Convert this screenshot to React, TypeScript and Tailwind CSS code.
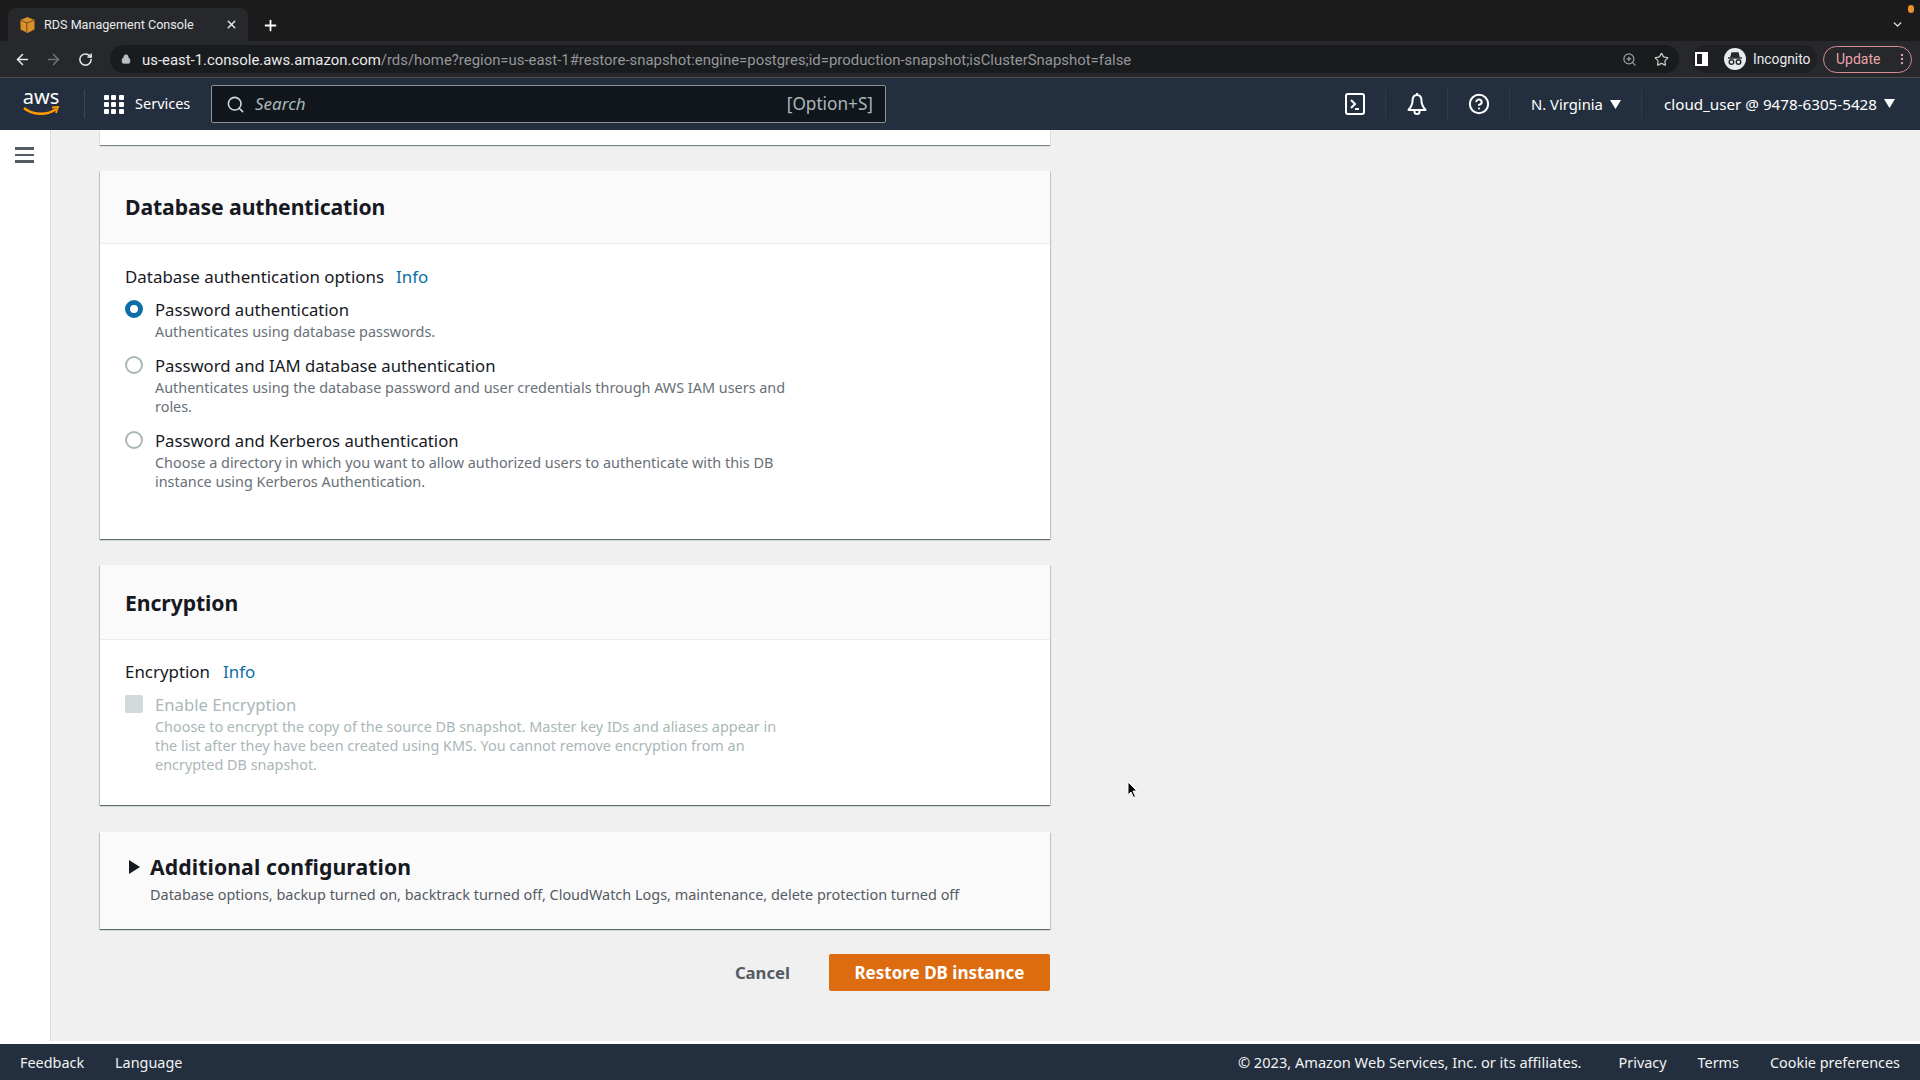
import { ArrowLeft, ArrowRight, RotateCw, Lock, ZoomIn, Star, X, Plus, ChevronDown, Search, CircleHelp, MoreVertical } from 'lucide-react';

const bodyFont = "font-['Noto_Sans','Open_Sans',sans-serif]";

function Card({ title, headerClass, children }: { title: string; headerClass: string; children: React.ReactNode }) {
  return (
    <section className="bg-white shadow-[0_1px_1px_0_rgba(0,28,36,0.5),1px_1px_1px_0_rgba(0,28,36,0.12),-1px_1px_1px_0_rgba(0,28,36,0.12)]">
      <div className={`${headerClass} bg-[#fafafa] border-b border-[#eaeded] pl-[25px] flex items-center`}>
        <h2 className="text-[21.2px] font-bold text-[#16191f] tracking-[-0.1px]">{title}</h2>
      </div>
      {children}
    </section>
  );
}

function InfoLabel({ label, gap }: { label: string; gap: string }) {
  return (
    <div className={`flex ${gap} text-[16.9px] leading-[20px] text-[#16191f]`}>
      <span>{label}</span>
      <span className="text-[#0b6ea8]">Info</span>
    </div>
  );
}

function RadioRow({ checked, title, lines }: { checked?: boolean; title: string; lines: string[] }) {
  return (
    <div className="flex gap-[12px]">
      <div
        className={
          checked
            ? 'w-[18px] h-[18px] mt-[1px] rounded-full border-[5px] border-[#0b6ea8] bg-white shrink-0'
            : 'w-[18px] h-[18px] mt-[1px] rounded-full border-2 border-[#aab7b8] bg-white shrink-0'
        }
      />
      <div>
        <div className="text-[16.7px] leading-[24px] text-[#16191f] -mt-[1px]">{title}</div>
        {lines.map(l => (
          <div key={l} className="text-[14.42px] leading-[19px] text-[#687078] whitespace-nowrap">{l}</div>
        ))}
      </div>
    </div>
  );
}

function AwsLogo() {
  return (
    <svg width="40" height="40" viewBox="0 0 40 40" className="mb-[4px]">
      <text x="20" y="22" textAnchor="middle" fill="#fff" fontSize="20" fontFamily="Noto Sans, sans-serif">aws</text>
      <path d="M3 26 C 11 33, 26 34, 35 27" stroke="#ff9900" strokeWidth="2.4" fill="none" />
      <path d="M31 25.5 L37 25 L35 31" stroke="#ff9900" strokeWidth="1.8" fill="none" />
    </svg>
  );
}

function GridIcon() {
  return (
    <div className="grid grid-cols-3 gap-[2px] w-[20px]">
      {Array.from({ length: 9 }).map((_, i) => (
        <div key={i} className="w-[5px] h-[5px] bg-white rounded-[1px]" />
      ))}
    </div>
  );
}

function NavIcon({ children }: { children: React.ReactNode }) {
  return (
    <div className="w-[62px] h-[30px] flex items-center justify-center border-r border-[#2f3b4a]">{children}</div>
  );
}

function ChromeBar() {
  return (
    <div className="font-['Roboto',sans-serif]">
      <div className="h-[41px] bg-[#1b1b1b] relative flex items-end pl-2">
        <div className="w-[240px] h-[33px] bg-[#26282b] rounded-t-lg flex items-center pl-[12px] pr-[10px] text-[#e8eaed]">
          <svg width="15" height="16" viewBox="0 0 15 16" className="shrink-0">
            <path d="M7.5 0 L14.5 3 V12.5 L7.5 16 L0.5 12.5 V3 Z" fill="#d88f2c" />
            <path d="M6.8 5 V15.5 M0.5 3 L7 6 L14.5 3" stroke="#7a4d14" strokeWidth="1" fill="none" />
          </svg>
          <span className="ml-[9px] text-[12.6px] leading-[20px] mt-[1px] flex-1 whitespace-nowrap">RDS Management Console</span>
          <X size={13} strokeWidth={2.5} />
        </div>
        <Plus size={17} strokeWidth={2.5} className="text-white ml-[14px] mb-[7px]" />
        <ChevronDown size={13} strokeWidth={2.5} className="text-[#e8eaed] ml-auto mr-[16px] mb-[10px]" />
        <div className="absolute right-[6px] top-[5px] w-[6px] h-[8px] rounded-full bg-[#e8912d]" />
      </div>
      <div className="h-[37px] bg-[#26282b] flex items-center border-b border-[#4a4c4e]">
        <div className="w-[110px] flex items-center gap-[14px] pl-[14px] shrink-0">
          <ArrowLeft size={17} strokeWidth={2.2} className="text-[#e8eaed]" />
          <ArrowRight size={17} strokeWidth={2.2} className="text-[#6f7275]" />
          <RotateCw size={15} strokeWidth={2.4} className="text-[#e8eaed] ml-[2px]" />
        </div>
        <div className="w-[1569px] h-[28px] bg-[#1a1b1d] rounded-full flex items-center pl-[11px] pr-[10px] text-[14.92px] leading-[20px] whitespace-nowrap shrink-0">
          <Lock size={10} fill="#bdc1c6" className="text-[#bdc1c6] mr-[11px]" />
          <span className="text-[#e8eaed] mt-[1px]">us-east-1.console.aws.amazon.com</span>
          <span className="text-[#93979c] mt-[1px]">/rds/home?region=us-east-1#restore-snapshot:engine=postgres;id=production-snapshot;isClusterSnapshot=false</span>
          <ZoomIn size={15} className="text-[#9aa0a6] ml-auto mr-[17px]" />
          <Star size={15} className="text-[#c4c7c5]" />
        </div>
        <div className="ml-[13px] w-[125px] h-[28px] bg-[#1f2023] rounded-full flex items-center shrink-0">
          <svg width="13" height="14" viewBox="0 0 13 14" className="ml-[3px]">
            <rect x="1" y="1" width="11" height="12" fill="none" stroke="#fff" strokeWidth="2" />
            <rect x="7" y="1" width="5" height="12" fill="#fff" />
          </svg>
          <div className="ml-[16px] w-[22px] h-[22px] rounded-full bg-[#e8eaed] flex items-center justify-center shrink-0">
            <svg width="16" height="14" viewBox="0 0 16 14" fill="none" stroke="#26282b" strokeWidth="1.4">
              <path d="M1 6 H15" />
              <path d="M4 5 L5 1 H11 L12 5 Z" fill="#26282b" />
              <circle cx="4.5" cy="10" r="2.3" />
              <circle cx="11.5" cy="10" r="2.3" />
            </svg>
          </div>
          <span className="ml-[7px] text-[13.8px] text-[#e8eaed] whitespace-nowrap">Incognito</span>
        </div>
        <div className="ml-[6px] w-[89px] h-[27px] border border-[#d98b92] rounded-full flex items-center pl-[12px] text-[14px] text-[#e6a5a9] shrink-0">
          Update
          <MoreVertical size={14} className="ml-auto mr-[2px]" />
        </div>
      </div>
    </div>
  );
}

export default function App() {
  return (
    <div className={`relative w-[1920px] h-[1080px] overflow-hidden flex flex-col bg-[#f0f0f0] ${bodyFont}`}>
      <ChromeBar />
      <header className="h-[52px] bg-[#232f3e] flex items-center text-white shrink-0">
        <div className="w-[84px] pl-[21px] flex items-center h-full"><AwsLogo /></div>
        <div className="w-px h-[28px] bg-[#3c4756]" />
        <div className="flex items-center gap-[11px] pl-[19px] w-[126px]">
          <GridIcon />
          <span className="text-[14.5px]">Services</span>
        </div>
        <div className="w-[675px] h-[38px] bg-[#11161d] border border-[#879596] rounded-[2px] flex items-center pl-[14px] pr-[12px] text-[#aab7b8]">
          <Search size={19} strokeWidth={2} className="text-[#d5dbdb]" />
          <span className="italic ml-[10px] text-[17px]">Search</span>
          <span className="ml-auto text-[17.2px]">[Option+S]</span>
        </div>
        <div className="ml-auto flex items-center">
          <NavIcon>
            <svg width="20" height="22" viewBox="0 0 20 22" fill="none" stroke="#fff" strokeWidth="2">
              <rect x="1" y="1" width="18" height="20" rx="2" />
              <path d="M6 7 L10 11 L6 15 M10 16 H14" />
            </svg>
          </NavIcon>
          <NavIcon>
            <svg width="20" height="24" viewBox="0 0 20 24" fill="none" stroke="#fff" strokeWidth="2" strokeLinejoin="round">
              <path d="M10 1 V3" />
              <path d="M10 3 C6.5 3 5.5 6 5.5 9 C5.5 13 4 15 1.5 18 H18.5 C16 15 14.5 13 14.5 9 C14.5 6 13.5 3 10 3 Z" />
              <path d="M7.5 18 V20 C7.5 22.5 12.5 22.5 12.5 20 V18" />
            </svg>
          </NavIcon>
          <NavIcon>
            <CircleHelp size={22} strokeWidth={2.2} />
          </NavIcon>
          <div className="w-[132px] h-[30px] pl-[21px] flex items-center border-r border-[#2f3b4a] whitespace-nowrap">
            <span className="text-[14.8px]">N. Virginia</span>
            <svg width="11" height="9" viewBox="0 0 11 9" className="ml-[7px]"><path d="M0 0 H11 L5.5 9 Z" fill="#fff" /></svg>
          </div>
          <div className="w-[278px] pl-[22px] flex items-center whitespace-nowrap">
            <span className="text-[15.2px]">cloud_user @ 9478-6305-5428</span>
            <svg width="11" height="9" viewBox="0 0 11 9" className="ml-[7px]"><path d="M0 0 H11 L5.5 9 Z" fill="#fff" /></svg>
          </div>
        </div>
      </header>
      <div className="flex-1 flex min-h-0">
        <aside className="w-[51px] bg-white border-r border-[#d5dbdb] pt-[17px] pl-[15px] shrink-0 flex flex-col gap-[4px]">
          <div className="w-[19px] h-[2.5px] bg-[#545b64]" />
          <div className="w-[19px] h-[2.5px] bg-[#545b64]" />
          <div className="w-[19px] h-[2.5px] bg-[#545b64]" />
        </aside>
        <main className="flex-1 pl-[49px] flex flex-col">
          <div className="w-[950px] flex flex-col">
            <div className="h-[15px] bg-white shadow-[0_1px_1px_0_rgba(0,28,36,0.5)]" />
            <div className="h-[26px]" />
            <Card title="Database authentication" headerClass="h-[73px]">
              <div className="h-[295px] pt-[23px] pl-[25px]">
                <InfoLabel label="Database authentication options" gap="gap-3" />
                <div className="mt-[12px] flex flex-col gap-[14px]">
                  <RadioRow checked title="Password authentication" lines={['Authenticates using database passwords.']} />
                  <RadioRow title="Password and IAM database authentication" lines={['Authenticates using the database password and user credentials through AWS IAM users and', 'roles.']} />
                  <RadioRow title="Password and Kerberos authentication" lines={['Choose a directory in which you want to allow authorized users to authenticate with this DB', 'instance using Kerberos Authentication.']} />
                </div>
              </div>
            </Card>
            <div className="h-[26px]" />
            <Card title="Encryption" headerClass="h-[75px] pt-[2px]">
              <div className="h-[165px] pt-[22px] pl-[25px]">
                <InfoLabel label="Encryption" gap="gap-[13px]" />
                <div className="mt-[12px] flex gap-[12px]">
                  <div className="mt-[1px] w-[18px] h-[18px] bg-[#d1d9d9] rounded-[2px] shrink-0" />
                  <div>
                    <div className="text-[16.7px] leading-[24px] text-[#aab7b8] -mt-[1px]">Enable Encryption</div>
                    {['Choose to encrypt the copy of the source DB snapshot. Master key IDs and aliases appear in', 'the list after they have been created using KMS. You cannot remove encryption from an', 'encrypted DB snapshot.'].map(l => (
                      <div key={l} className="text-[14.42px] leading-[19px] text-[#aab7b8] whitespace-nowrap">{l}</div>
                    ))}
                  </div>
                </div>
              </div>
            </Card>
            <div className="h-[27px]" />
            <section className="h-[97px] bg-[#fafafa] pl-[29px] pt-[22px] shadow-[0_1px_1px_0_rgba(0,28,36,0.5),1px_1px_1px_0_rgba(0,28,36,0.12),-1px_1px_1px_0_rgba(0,28,36,0.12)]">
              <div className="flex items-center gap-[10px]">
                <svg width="11" height="14" viewBox="0 0 11 14"><path d="M0 0 L11 7 L0 14 Z" fill="#16191f" /></svg>
                <h2 className="text-[21.2px] leading-[26px] font-bold text-[#16191f] tracking-[0.1px]">Additional configuration</h2>
              </div>
              <div className="pl-[21px] mt-[5px] text-[14.45px] leading-[20px] text-[#545b64] whitespace-nowrap">
                Database options, backup turned on, backtrack turned off, CloudWatch Logs, maintenance, delete protection turned off
              </div>
            </section>
            <div className="mt-[25px] flex justify-end items-center">
              <span className="text-[16.7px] font-bold text-[#545b64] mr-[39px]">Cancel</span>
              <button className="w-[221px] h-[37px] bg-[#dd6b10] rounded-[2px] text-white text-[17px] font-bold">Restore DB instance</button>
            </div>
          </div>
        </main>
      </div>
      <footer className="h-[39px] border-t-[3px] border-white bg-[#232f3e] flex items-center pt-[1px] text-[14.4px] text-[#f2f3f3] pl-[20px] pr-[20px] shrink-0">
        <span>Feedback</span>
        <span className="ml-[31px]">Language</span>
        <span className="ml-auto text-[14.6px]">© 2023, Amazon Web Services, Inc. or its affiliates.</span>
        <span className="ml-[37px]">Privacy</span>
        <span className="ml-[31px]">Terms</span>
        <span className="ml-[31px]">Cookie preferences</span>
      </footer>

      {/* mouse pointer */}
      <svg width="12" height="18" viewBox="0 0 12 18" className="absolute left-[1127px] top-[781px]">
        <path d="M1 1 V14 L4 11 L6.5 16.5 L8.5 15.5 L6 10 H10 Z" fill="#000" stroke="#fff" strokeWidth="1" />
      </svg>
    </div>
  );
}
